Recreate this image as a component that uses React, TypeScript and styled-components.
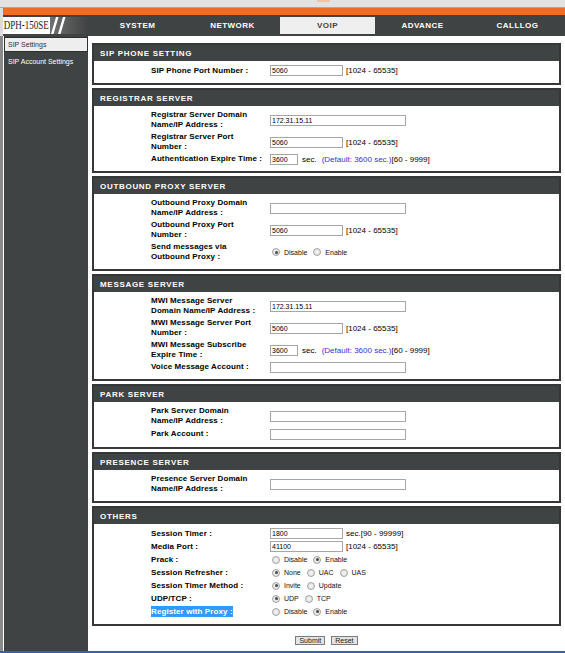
import React from "react";
import styled, { createGlobalStyle } from "styled-components";

const Global = createGlobalStyle`
  html, body { margin: 0; padding: 0; background: #fff; }
  body { font-family: "Liberation Sans", Arial, sans-serif; width: 565px; height: 653px; overflow: hidden; }
  #root { width: 565px; height: 653px; }
`;

const Page = styled.div`
  width: 565px;
  height: 653px;
  display: flex;
  flex-direction: column;
  overflow: hidden;
`;

const TopStrip = styled.div`
  height: 7px;
  flex: none;
  display: flex;
  background: #e2e2e2;
  border-bottom: 1px solid #a9a9a9;
`;

const TopMark = styled.div`
  margin-left: 317px;
  width: 13px;
  height: 2px;
  background: #f1c2a2;
`;

const Header = styled.div`
  flex: none;
  display: flex;
  flex-direction: column;
  border-left: 3px solid #dcdcdc;
`;

const OrangeBar = styled.div`
  height: 7px;
  background: #f26b21;
`;

const NavBar = styled.div`
  height: 21px;
  background: #404343;
  display: flex;
`;

const Logo = styled.div`
  width: 85px;
  margin-right: 2px;
  display: flex;
  align-items: center;
`;

const LogoBox = styled.div`
  width: 47px;
  height: 17px;
  background: #fff;
  display: flex;
  align-items: center;
  justify-content: center;
  overflow: hidden;
`;

const LogoWord = styled.span`
  display: inline-block;
  font-family: "Liberation Serif", "Times New Roman", serif;
  font-size: 12.5px;
  color: #222;
  white-space: nowrap;
  transform: scaleX(0.72);
`;

const LogoSlash = styled.div`
  flex: 1;
  height: 17px;
  background: linear-gradient(90deg, #707070, #404343);
  display: flex;
`;

const NavItem = styled.div<{ $active?: boolean }>`
  width: 95px;
  margin: 2px 0;
  display: flex;
  align-items: center;
  justify-content: center;
  font-size: 8px;
  font-weight: bold;
  letter-spacing: 0.45px;
  color: ${(p) => (p.$active ? "#404343" : "#ffffff")};
  background: ${(p) => (p.$active ? "#efefef" : "transparent")};
`;

const Body = styled.div`
  height: 615px;
  flex: none;
  display: flex;
  border-left: 3px solid #8a8a8a;
`;

const Sidebar = styled.div`
  width: 84px;
  flex: none;
  border-left: 1px solid #fff;
  background: #404343;
  padding-top: 1px;
  display: flex;
  flex-direction: column;
`;

const SideItem = styled.div<{ $active?: boolean }>`
  height: ${(p) => (p.$active ? 15 : 19)}px;
  box-sizing: border-box;
  display: flex;
  align-items: center;
  padding-left: ${(p) => (p.$active ? 3 : 4)}px;
  font-size: 7px;
  color: ${(p) => (p.$active ? "#333" : "#fff")};
  background: ${(p) => (p.$active ? "#eeeeee" : "transparent")};
  border: ${(p) => (p.$active ? "1px solid #2e2e2e" : "none")};
`;

const Content = styled.div`
  flex: 1;
  padding: 7px 4px 0 4px;
  display: flex;
  flex-direction: column;
`;

const Panel = styled.div`
  border: 2px solid #363838;
  margin-bottom: 3px;
  background: #fff;
`;

const PanelHeader = styled.div`
  height: 16px;
  background: #404343;
  color: #fff;
  font-size: 8px;
  font-weight: bold;
  letter-spacing: 0.7px;
  display: flex;
  align-items: center;
  padding-left: 6px;
`;

const PanelBody = styled.div`
  padding: 3px 0 6px;
`;

const Row = styled.div<{ $h: number }>`
  height: ${(p) => p.$h}px;
  display: flex;
  align-items: center;
  padding-left: 57px;
`;

const Label = styled.div`
  width: 118px;
  flex: none;
  font-size: 8px;
  font-weight: bold;
  line-height: 10px;
  letter-spacing: 0.1px;
  color: #000;
  white-space: nowrap;
`;

const Selected = styled.span`
  background: #3399ff;
  color: #fff;
  padding: 1px 0;
`;

const Value = styled.div`
  display: flex;
  align-items: center;
  font-size: 8px;
  color: #000;
  white-space: pre;
`;

const TextInput = styled.input<{ $w: number }>`
  width: ${(p) => p.$w}px;
  height: 11px;
  box-sizing: border-box;
  margin: 0 0 0 1px;
  padding: 0 1px;
  border: 1px solid #a6a6a6;
  font-family: "Liberation Sans", Arial, sans-serif;
  font-size: 7px;
  line-height: 9px;
  color: #000;
  background: #fff;
  outline: none;
`;

const Hint = styled.span<{ $blue?: boolean }>`
  color: ${(p) => (p.$blue ? "#3333dd" : "#000")};
`;

const Gap = styled.span<{ $w: number }>`
  display: inline-block;
  width: ${(p) => p.$w}px;
`;

const Option = styled.span`
  display: inline-flex;
  align-items: center;
  margin: 0 3px;
  font-size: 7px;
  color: #111;
`;

const Dot = styled.span<{ $on?: boolean }>`
  width: 8px;
  height: 8px;
  box-sizing: border-box;
  border-radius: 50%;
  border: 1px solid #a3a3a3;
  background: radial-gradient(circle, #f6f6f6 0%, #dadada 100%);
  margin-right: 4px;
  display: inline-flex;
  align-items: center;
  justify-content: center;
  &::after {
    content: "";
    width: 3px;
    height: 3px;
    border-radius: 50%;
    background: ${(p) => (p.$on ? "#4a4a4a" : "transparent")};
  }
`;

const Buttons = styled.div`
  margin-top: 7px;
  display: flex;
  justify-content: center;
  gap: 6px;
`;

const Button = styled.button`
  height: 9px;
  box-sizing: border-box;
  margin: 0;
  padding: 0 3px;
  border: 1px solid #7c7c7c;
  background: #e4e4e4;
  font-family: "Liberation Sans", Arial, sans-serif;
  font-size: 7px;
  line-height: 7px;
  color: #222;
`;

const Taskbar = styled.div`
  height: 2px;
  flex: none;
  background: #3c5fa7;
`;

type Field =
  | { kind: "input"; w: number; v?: string; after?: React.ReactNode }
  | { kind: "radio"; opts: { t: string; on?: boolean }[] };

type RowDef = { label: React.ReactNode[]; field: Field; h?: number };

const range = (
  <>
    <Gap $w={3} />
    [1024 - 65535]
  </>
);

const secHint = (
  <>
    <Gap $w={4} />
    sec.
    <Gap $w={5} />
    <Hint $blue>(Default: 3600 sec.)</Hint>
    [60 - 9999]
  </>
);

const sections: { title: string; rows: RowDef[] }[] = [
  {
    title: "SIP PHONE SETTING",
    rows: [{ label: ["SIP Phone Port Number :"], h: 13, field: { kind: "input", w: 73, v: "5060", after: range } }],
  },
  {
    title: "REGISTRAR SERVER",
    rows: [
      { label: ["Registrar Server Domain", "Name/IP Address :"], field: { kind: "input", w: 136, v: "172.31.15.11" } },
      { label: ["Registrar Server Port", "Number :"], field: { kind: "input", w: 73, v: "5060", after: range } },
      { label: ["Authentication Expire Time :"], field: { kind: "input", w: 28, v: "3600", after: secHint } },
    ],
  },
  {
    title: "OUTBOUND PROXY SERVER",
    rows: [
      { label: ["Outbound Proxy Domain", "Name/IP Address :"], field: { kind: "input", w: 136 } },
      { label: ["Outbound Proxy Port", "Number :"], field: { kind: "input", w: 73, v: "5060", after: range } },
      {
        label: ["Send messages via", "Outbound Proxy :"],
        field: { kind: "radio", opts: [{ t: "Disable", on: true }, { t: "Enable" }] },
      },
    ],
  },
  {
    title: "MESSAGE SERVER",
    rows: [
      { label: ["MWI Message Server", "Domain Name/IP Address :"], field: { kind: "input", w: 136, v: "172.31.15.11" } },
      { label: ["MWI Message Server Port", "Number :"], field: { kind: "input", w: 73, v: "5060", after: range } },
      { label: ["MWI Message Subscribe", "Expire Time :"], field: { kind: "input", w: 28, v: "3600", after: secHint } },
      { label: ["Voice Message Account :"], field: { kind: "input", w: 136 } },
    ],
  },
  {
    title: "PARK SERVER",
    rows: [
      { label: ["Park Server Domain", "Name/IP Address :"], field: { kind: "input", w: 136 } },
      { label: ["Park Account :"], h: 14, field: { kind: "input", w: 136 } },
    ],
  },
  {
    title: "PRESENCE SERVER",
    rows: [{ label: ["Presence Server Domain", "Name/IP Address :"], field: { kind: "input", w: 136 } }],
  },
  {
    title: "OTHERS",
    rows: [
      {
        label: ["Session Timer :"],
        h: 13,
        field: {
          kind: "input",
          w: 73,
          v: "1800",
          after: (
            <>
              <Gap $w={3} />
              sec.[90 - 99999]
            </>
          ),
        },
      },
      { label: ["Media Port :"], h: 13, field: { kind: "input", w: 73, v: "41100", after: range } },
      { label: ["Prack :"], h: 13, field: { kind: "radio", opts: [{ t: "Disable" }, { t: "Enable", on: true }] } },
      {
        label: ["Session Refresher :"],
        h: 13,
        field: { kind: "radio", opts: [{ t: "None", on: true }, { t: "UAC" }, { t: "UAS" }] },
      },
      {
        label: ["Session Timer Method :"],
        h: 13,
        field: { kind: "radio", opts: [{ t: "Invite", on: true }, { t: "Update" }] },
      },
      { label: ["UDP/TCP :"], h: 13, field: { kind: "radio", opts: [{ t: "UDP", on: true }, { t: "TCP" }] } },
      {
        label: [<Selected key="s">Register with Proxy :</Selected>],
        h: 13,
        field: { kind: "radio", opts: [{ t: "Disable" }, { t: "Enable", on: true }] },
      },
    ],
  },
];

function FieldView({ f }: { f: Field }) {
  if (f.kind === "input") {
    return (
      <Value>
        <TextInput $w={f.w} defaultValue={f.v ?? ""} readOnly />
        {f.after}
      </Value>
    );
  }
  return (
    <Value>
      {f.opts.map((o) => (
        <Option key={o.t}>
          <Dot $on={o.on} />
          {o.t}
        </Option>
      ))}
    </Value>
  );
}

const SlashSvg = () => (
  <svg width="38" height="17" viewBox="0 0 38 17">
    <polygon points="1,17 3.5,17 8.5,0 6,0" fill="#fff" />
    <polygon points="8,17 10.5,17 15.5,0 13,0" fill="#fff" />
  </svg>
);

export default function App() {
  const navs = ["SYSTEM", "NETWORK", "VOIP", "ADVANCE", "CALLLOG"];
  return (
    <>
      <Global />
      <Page>
        <TopStrip>
          <TopMark />
        </TopStrip>
        <Header>
          <OrangeBar />
          <NavBar>
            <Logo>
              <LogoBox>
                <LogoWord>DPH-150SE</LogoWord>
              </LogoBox>
              <LogoSlash>
                <SlashSvg />
              </LogoSlash>
            </Logo>
            {navs.map((n) => (
              <NavItem key={n} $active={n === "VOIP"}>
                {n}
              </NavItem>
            ))}
          </NavBar>
        </Header>
        <Body>
          <Sidebar>
            <SideItem $active>SIP Settings</SideItem>
            <SideItem>SIP Account Settings</SideItem>
          </Sidebar>
          <Content>
            {sections.map((s) => (
              <Panel key={s.title}>
                <PanelHeader>{s.title}</PanelHeader>
                <PanelBody>
                  {s.rows.map((r, i) => (
                    <Row key={i} $h={r.h ?? (r.label.length > 1 ? 22 : 12)}>
                      <Label>
                        {r.label.map((l, j) => (
                          <React.Fragment key={j}>
                            {j > 0 && <br />}
                            {l}
                          </React.Fragment>
                        ))}
                      </Label>
                      <FieldView f={r.field} />
                    </Row>
                  ))}
                </PanelBody>
              </Panel>
            ))}
            <Buttons>
              <Button>Submit</Button>
              <Button>Reset</Button>
            </Buttons>
          </Content>
        </Body>
        <Taskbar />
      </Page>
    </>
  );
}
